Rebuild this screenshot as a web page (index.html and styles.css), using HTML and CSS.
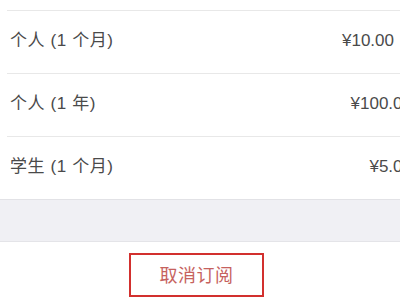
FILE: index.html
```html
<!DOCTYPE html>
<html lang="zh-CN">
<head>
<meta charset="utf-8">
<link rel="stylesheet" href="styles.css">
</head>
<body>
<div class="page">
  <ul class="plans">
    <li class="plan"><span class="name">个人 (1 个月)</span><span class="price">¥10.00</span></li>
    <li class="plan"><span class="name">个人 (1 年)</span><span class="price price-wide">¥100.00</span></li>
    <li class="plan"><span class="name">学生 (1 个月)</span><span class="price price-wide">¥5.00</span></li>
  </ul>
  <div class="band"></div>
  <div class="actions">
    <button class="cancel">取消订阅</button>
  </div>
</div>
</body>
</html>
```
FILE: styles.css
```css
html, body {
  margin: 0;
  padding: 0;
  background: #ffffff;
}
.page {
  width: 400px;
  height: 300px;
  overflow: hidden;
  font-family: "Liberation Sans", "Noto Sans CJK SC", sans-serif;
  color: #4a4a4a;
}
.plans {
  list-style: none;
  margin: 0;
  padding: 10px 0 0 0;
}
.plan {
  display: flex;
  align-items: center;
  justify-content: space-between;
  box-sizing: border-box;
  height: 63px;
  padding: 0 0 3px 3px;
  margin-left: 7px;
  border-top: 1px solid #e8e8e8;
  font-size: 17px;
  line-height: 20px;
}
.name {
  letter-spacing: 0.6px;
}
.price {
  padding-right: 6px;
  white-space: nowrap;
}
.price-wide {
  padding-right: 0;
  margin-right: -12px;
}
.band {
  height: 41px;
  background: #f0f0f4;
  border-top: 1px solid #e2e2e6;
  border-bottom: 1px solid #e4e4e8;
}
.actions {
  padding: 11px 0 0 129px;
}
.cancel {
  box-sizing: border-box;
  width: 135px;
  height: 44px;
  background: #ffffff;
  border: 2px solid #d2302e;
  color: #c6625e;
  font-family: "Noto Sans CJK SC", sans-serif;
  font-size: 18px;
  padding: 0 0 2px 0;
  letter-spacing: 0.5px;
}
```
